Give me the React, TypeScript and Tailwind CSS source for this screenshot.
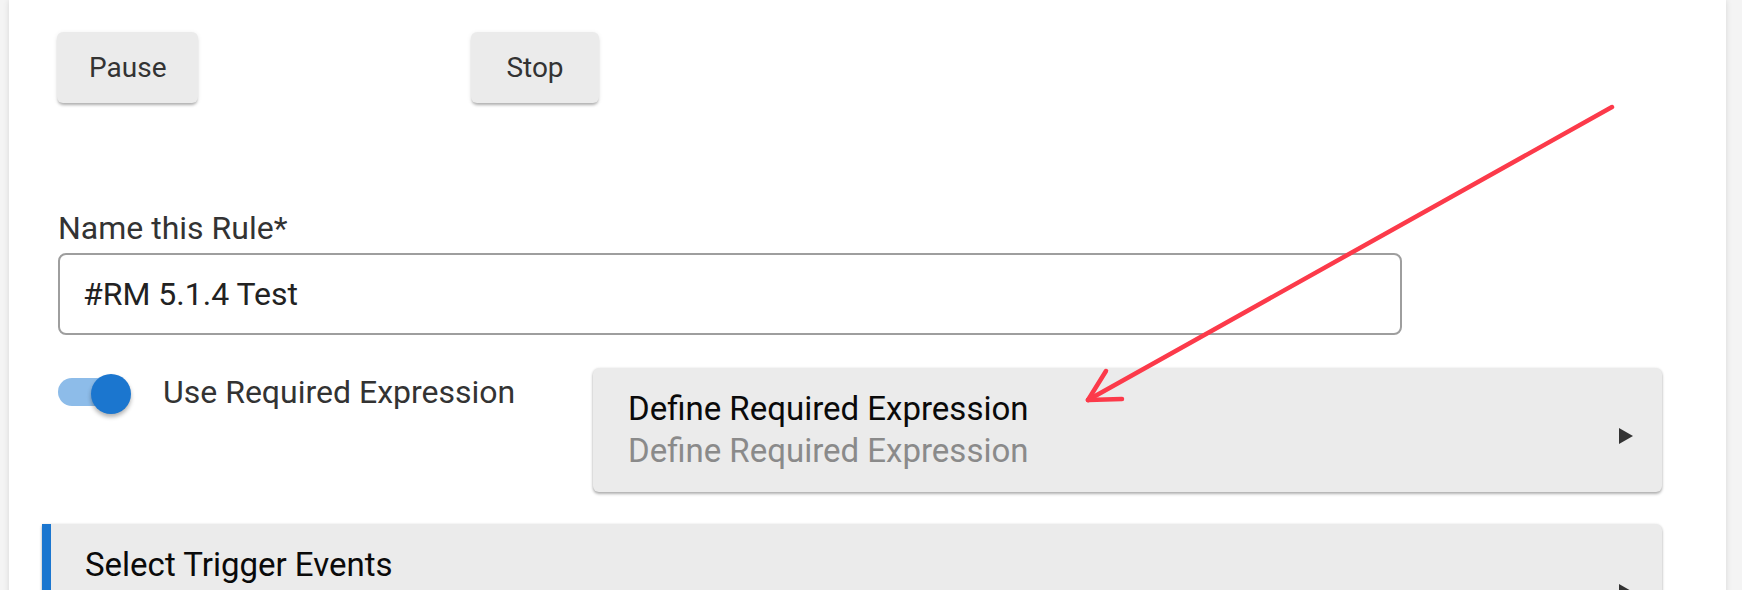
import React from "react";

function Btn({ label, minW }: { label: string; minW?: boolean }) {
  return (
    <button
      className={
        "h-[71px] px-[32px] rounded-[6px] bg-[#ebebeb] text-[#333333] text-[28px] leading-[40px] flex items-center justify-center shadow-[0_3px_3px_-1px_rgba(0,0,0,0.28),0_1px_5px_rgba(0,0,0,0.08)] " +
        (minW ? "min-w-[128px]" : "")
      }
    >
      {label}
    </button>
  );
}

export default function App() {
  return (
    <div className="relative w-[1742px] h-[590px] overflow-hidden bg-[#f4f4f4] font-['Roboto','Liberation_Sans',sans-serif]">
      <div className="ml-[9px] w-[1717px] h-[700px] bg-white shadow-[0_0_6px_rgba(0,0,0,0.12)] pl-[48px] pt-[32px]">
        {/* buttons */}
        <div className="flex">
          <div className="w-[414px]">
            <div className="inline-flex">
              <Btn label="Pause" />
            </div>
          </div>
          <Btn label="Stop" minW />
        </div>

        {/* name */}
        <div className="mt-[105px] pl-[1px] text-[32px] leading-[40px] text-[#333333]">Name this Rule*</div>
        <div className="mt-[5px] ml-[1px] w-[1344px] h-[82px] border-2 border-[#9e9e9e] rounded-[8px] pl-[23px] flex items-center text-[32px] leading-[40px] text-[#222222]">
          #RM 5.1.4 Test
        </div>

        {/* required expression row */}
        <div className="mt-[33px] flex items-start">
          <div className="w-[536px] flex items-start pt-[4px] pl-[1px]">
            <div className="relative w-[105px] h-[40px] shrink-0">
              <div className="absolute left-0 top-[6px] w-[68px] h-[28px] rounded-full bg-[#8dbce9]" />
              <div className="absolute left-[33px] top-[2px] w-[40px] h-[40px] rounded-full bg-[#1b76cf] shadow-[0_3px_4px_rgba(0,0,0,0.3)]" />
            </div>
            <div className="text-[32px] leading-[40px] text-[#333333]">Use Required Expression</div>
          </div>
          <div className="w-[1069px] h-[124px] bg-[#ebebeb] rounded-[6px] shadow-[0_2px_3px_rgba(0,0,0,0.3),0_0_3px_rgba(0,0,0,0.08)] flex items-center pl-[35px] pr-[29px]">
            <div className="flex-1 text-[33px] leading-[42px]">
              <div className="text-[#0a0a0a]">Define Required Expression</div>
              <div className="text-[#8a8a8a]">Define Required Expression</div>
            </div>
            <svg width="14" height="16" viewBox="0 0 14 16" className="mt-[12px] shrink-0">
              <polygon points="0,0 14,8 0,16" fill="#333333" />
            </svg>
          </div>
        </div>

        {/* trigger events */}
        <div className="mt-[32px] -ml-[15px] w-[1620px] h-[126px] bg-[#ebebeb] rounded-r-[6px] border-l-[9px] border-[#1b76cf] shadow-[0_2px_3px_rgba(0,0,0,0.3),0_0_3px_rgba(0,0,0,0.08)] flex items-start pl-[34px] pr-[29px]">
          <div className="flex-1 pt-[20px] text-[33px] leading-[42px] text-[#0a0a0a]">Select Trigger Events</div>
          <svg width="14" height="16" viewBox="0 0 14 16" className="mt-[60px] shrink-0">
            <polygon points="0,0 14,8 0,16" fill="#333333" />
          </svg>
        </div>
      </div>

      {/* red annotation arrow */}
      <svg className="absolute left-0 top-0 pointer-events-none" width="1742" height="590" viewBox="0 0 1742 590">
        <g stroke="#fc3a4a" strokeWidth="4.5" strokeLinecap="round" fill="none">
          <line x1="1612" y1="107" x2="1088" y2="400" />
          <line x1="1088" y1="400" x2="1106" y2="371" />
          <line x1="1088" y1="400" x2="1122" y2="399" />
        </g>
      </svg>
    </div>
  );
}
